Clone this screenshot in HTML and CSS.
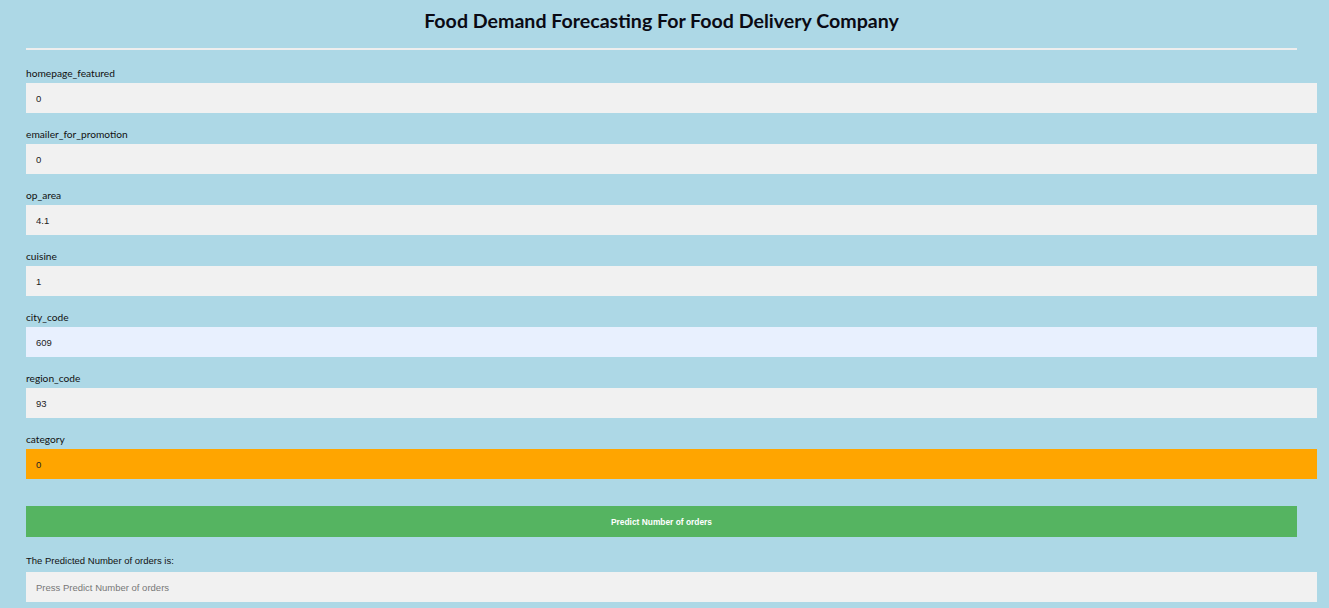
FILE: index.html
```html
<!DOCTYPE html>
<html lang="en">
<head>
    <meta charset="UTF-8">
    <meta name="viewport" content="width=device-width, initial-scale=1.0">
    <title>Food Demand Forecasting</title>
    <link rel="stylesheet" href="styles.css">
</head>
<body>
    <div class="page">
        <h1 class="title">Food Demand Forecasting For Food Delivery Company</h1>
        <hr class="rule">
        <form class="form">
            <div class="field">
                <label for="homepage_featured">homepage_featured</label>
                <input id="homepage_featured" class="box" type="text" value="0">
            </div>
            <div class="field">
                <label for="emailer_for_promotion">emailer_for_promotion</label>
                <input id="emailer_for_promotion" class="box" type="text" value="0">
            </div>
            <div class="field">
                <label for="op_area">op_area</label>
                <input id="op_area" class="box" type="text" value="4.1">
            </div>
            <div class="field">
                <label for="cuisine">cuisine</label>
                <input id="cuisine" class="box" type="text" value="1">
            </div>
            <div class="field">
                <label for="city_code">city_code</label>
                <input id="city_code" class="box autofilled" type="text" value="609">
            </div>
            <div class="field">
                <label for="region_code">region_code</label>
                <input id="region_code" class="box" type="text" value="93">
            </div>
            <div class="field">
                <label for="category">category</label>
                <input id="category" class="box active" type="text" value="0">
            </div>
            <button type="button" class="predict">Predict Number of orders</button>
            <div class="result">
                <label for="output" class="result-label">The Predicted Number of orders is:</label>
                <input id="output" class="box" type="text" placeholder="Press Predict Number of orders" readonly>
            </div>
        </form>
    </div>
</body>
</html>
```

FILE: styles.css
```css
* {
    margin: 0;
    padding: 0;
}

body {
    background-color: #add8e6;
    font-family: 'Lato', 'Open Sans', sans-serif;
    color: #111;
}

.page {
    padding: 0 32px 0 26px;
}

.title {
    margin-top: 9px;
    text-align: center;
    font-size: 19.6px;
    line-height: 24px;
    font-weight: 700;
    color: #0a0a14;
}

.rule {
    margin-top: 15px;
    border: none;
    height: 2px;
    background-color: #eeeeee;
}

.form {
    padding-top: 16px;
}

.field {
    margin-bottom: 14px;
}

.field label,
.result-label {
    display: block;
    font-size: 10.2px;
    line-height: 14px;
    margin-bottom: 3px;
}

.box {
    display: block;
    box-sizing: content-box;
    width: 100%;
    height: 30px;
    padding: 0 10px;
    border: none;
    outline: none;
    background-color: #f1f1f1;
    font-family: 'Liberation Sans', Arial, sans-serif;
    font-size: 9.5px;
    color: #222;
}

.box::placeholder {
    color: #777;
}

.box.autofilled {
    background-color: #e8f0fe;
}

.box.active {
    background-color: #ffa500;
}

.predict {
    display: block;
    width: 100%;
    height: 31px;
    margin-top: 27px;
    border: none;
    background-color: #55b461;
    color: #ffffff;
    font-family: 'Liberation Sans', Arial, sans-serif;
    font-size: 8.4px;
    font-weight: 700;
    cursor: pointer;
}

.result {
    margin-top: 17px;
}

.result-label {
    font-family: 'Liberation Sans', Arial, sans-serif;
    font-size: 9.5px;
    margin-bottom: 4px;
}
```
